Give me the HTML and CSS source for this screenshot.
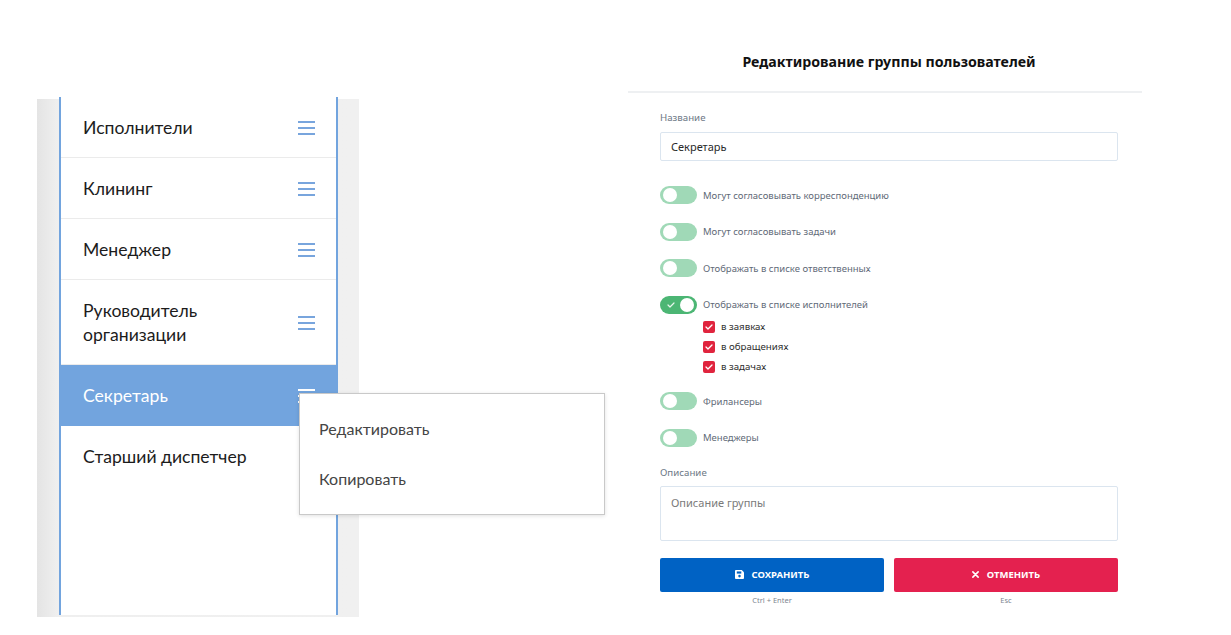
FILE: index.html
```html
<!DOCTYPE html>
<html lang="ru">
<head>
<meta charset="utf-8">
<title>Редактирование группы пользователей</title>
<link rel="stylesheet" href="styles.css">
</head>
<body>
<div class="page">
  <div class="groups">
    <div class="groups-inner">
      <ul class="group-list">
        <li class="group"><span class="group-name">Исполнители</span><span class="burger"><i></i><i></i><i></i></span></li>
        <li class="group"><span class="group-name">Клининг</span><span class="burger"><i></i><i></i><i></i></span></li>
        <li class="group"><span class="group-name">Менеджер</span><span class="burger"><i></i><i></i><i></i></span></li>
        <li class="group"><span class="group-name">Руководитель<br>организации</span><span class="burger"><i></i><i></i><i></i></span></li>
        <li class="group group-active"><span class="group-name">Секретарь</span><span class="burger"><i></i><i></i><i></i></span>
          <div class="menu">
            <div class="menu-item">Редактировать</div>
            <div class="menu-item">Копировать</div>
          </div>
        </li>
        <li class="group group-last"><span class="group-name">Старший диспетчер</span></li>
      </ul>
    </div>
  </div>

  <div class="editor">
    <h1 class="editor-title">Редактирование группы пользователей</h1>
    <div class="editor-body">
      <div class="field-label">Название</div>
      <div class="input">Секретарь</div>

      <div class="toggles">
        <div class="toggle-row"><span class="toggle"></span><span class="toggle-label">Могут согласовывать корреспонденцию</span></div>
        <div class="toggle-row"><span class="toggle"></span><span class="toggle-label">Могут согласовывать задачи</span></div>
        <div class="toggle-row"><span class="toggle"></span><span class="toggle-label">Отображать в списке ответственных</span></div>
        <div class="toggle-group">
          <div class="toggle-row"><span class="toggle toggle-on"><svg class="toggle-check" viewBox="0 0 8 6" width="8" height="6"><path d="M1 3 L3 5 L7 1" fill="none" stroke="#e8f6ed" stroke-width="1.2" stroke-linecap="round" stroke-linejoin="round"/></svg></span><span class="toggle-label">Отображать в списке исполнителей</span></div>
          <div class="checks">
            <div class="check-row"><span class="check"><svg viewBox="0 0 8 6" width="8" height="6"><path d="M1 3 L3 5 L7 1" fill="none" stroke="#fff" stroke-width="1.3" stroke-linecap="round" stroke-linejoin="round"/></svg></span><span class="check-label">в заявках</span></div>
            <div class="check-row"><span class="check"><svg viewBox="0 0 8 6" width="8" height="6"><path d="M1 3 L3 5 L7 1" fill="none" stroke="#fff" stroke-width="1.3" stroke-linecap="round" stroke-linejoin="round"/></svg></span><span class="check-label">в обращениях</span></div>
            <div class="check-row"><span class="check"><svg viewBox="0 0 8 6" width="8" height="6"><path d="M1 3 L3 5 L7 1" fill="none" stroke="#fff" stroke-width="1.3" stroke-linecap="round" stroke-linejoin="round"/></svg></span><span class="check-label">в задачах</span></div>
          </div>
        </div>
        <div class="toggle-row"><span class="toggle"></span><span class="toggle-label">Фрилансеры</span></div>
        <div class="toggle-row"><span class="toggle"></span><span class="toggle-label">Менеджеры</span></div>
      </div>

      <div class="field-label">Описание</div>
      <div class="textarea">Описание группы</div>

      <div class="actions">
        <div class="action">
          <button class="btn btn-save"><svg viewBox="0 0 10 10" width="9" height="9"><path d="M1 0 H7.5 L10 2.5 V9 Q10 10 9 10 H1 Q0 10 0 9 V1 Q0 0 1 0 Z" fill="#fff"/><rect x="2" y="1.6" width="5" height="2.4" fill="#0062c4"/><circle cx="5" cy="6.8" r="1.4" fill="#0062c4"/></svg>Сохранить</button>
          <div class="hint">Ctrl + Enter</div>
        </div>
        <div class="action">
          <button class="btn btn-cancel"><svg viewBox="0 0 8 8" width="7" height="7"><path d="M1 1 L7 7 M7 1 L1 7" stroke="#fff" stroke-width="1.8" stroke-linecap="round"/></svg>Отменить</button>
          <div class="hint">Esc</div>
        </div>
      </div>
    </div>
  </div>
</div>
</body>
</html>
```

FILE: styles.css
```css
* { box-sizing: border-box; }
html, body { margin: 0; padding: 0; background: #fff; }
body { font-family: "Open Sans", "Noto Sans", sans-serif; color: #222; }

.page {
  display: flex;
  align-items: flex-start;
  padding-left: 37px;
  width: 1231px;
  height: 635px;
  overflow: hidden;
}

/* Left: group list */
.groups {
  margin-top: 99px;
  width: 322px;
  height: 518px;
  padding: 0 21px 0 22px;
  background: linear-gradient(to right, #e4e4e4 0, #efefef 20px, #f0f0f0 100%);
  flex-shrink: 0;
}
.groups-inner {
  height: 100%;
  background: #fff;
  border-left: 2px solid #72a4de;
  border-right: 2px solid #72a4de;
}
.group-list {
  list-style: none;
  margin: -2px 0 0;
  padding: 0;
}
.group {
  position: relative;
  display: flex;
  align-items: center;
  justify-content: space-between;
  padding: 19px 21px 17px 22px;
  border-bottom: 1px solid #ebebeb;
  font-family: "Lato", "Open Sans", sans-serif;
  font-size: 17.6px;
  line-height: 24px;
  color: #1c1c1c;
}
.group-last { border-bottom: none; }
.group-active {
  background: #72a4de;
  color: #fff;
  border-bottom-color: #72a4de;
}
.burger {
  display: flex;
  flex-direction: column;
  gap: 4px;
  width: 17px;
}
.burger i {
  display: block;
  height: 2px;
  background: #78a5dd;
}
.group-active .burger i { background: #fff; }

.menu {
  position: absolute;
  left: 238px;
  top: 28px;
  width: 306px;
  height: 122px;
  padding: 10px 0;
  background: #fff;
  border: 1px solid #c9c9c9;
  box-shadow: 0 1px 4px rgba(0,0,0,0.12);
  z-index: 2;
}
.menu-item {
  height: 50px;
  line-height: 50px;
  padding-left: 19px;
  font-family: "Lato", "Open Sans", sans-serif;
  font-size: 16px;
  color: #454545;
}

/* Right: editor */
.editor {
  margin-left: 269px;
  width: 514px;
  flex-shrink: 0;
}
.editor-title {
  margin: 0;
  padding: 52px 24px 19px 32px;
  text-align: center;
  font-family: "Noto Sans", "Open Sans", sans-serif;
  font-size: 14.2px;
  line-height: 20px;
  font-weight: 700;
  color: #111;
  border-bottom: 2px solid #eef0f2;
}
.editor-body {
  padding: 18px 24px 0 32px;
  font-family: "Noto Sans", "Open Sans", sans-serif;
}
.field-label {
  font-size: 9.7px;
  line-height: 14px;
  color: #6d7886;
}
.input {
  margin-top: 7px;
  height: 29px;
  border: 1px solid #dbe5ef;
  border-radius: 2px;
  padding: 0 10px;
  font-size: 11px;
  line-height: 27px;
  color: #2a2a2a;
}
.toggles {
  margin-top: 25px;
  display: flex;
  flex-direction: column;
  gap: 18.6px;
  margin-bottom: 19px;
}
.toggle-group { margin-bottom: 1px; }
.toggle-row {
  display: flex;
  align-items: center;
  height: 18px;
}
.toggle {
  position: relative;
  width: 37px;
  height: 18px;
  border-radius: 9px;
  background: #a0d9b7;
  flex-shrink: 0;
}
.toggle::after {
  content: "";
  position: absolute;
  left: 3px;
  top: 2px;
  width: 14px;
  height: 14px;
  border-radius: 50%;
  background: #fff;
}
.toggle-on { background: #4cb674; }
.toggle-on::after { left: 20px; }
.toggle-check {
  position: absolute;
  left: 7px;
  top: 6px;
}
.toggle-label {
  margin-left: 6px;
  font-size: 9.5px;
  color: #5f6a78;
}
.checks {
  margin-top: 7px;
  padding-left: 43px;
  display: flex;
  flex-direction: column;
  gap: 8px;
}
.check-row {
  display: flex;
  align-items: center;
  height: 12px;
}
.check {
  width: 12px;
  height: 12px;
  border-radius: 2px;
  background: #e0243e;
  display: flex;
  align-items: center;
  justify-content: center;
}
.check-label {
  margin-left: 6px;
  font-size: 9.7px;
  color: #2e2e2e;
}
.textarea {
  margin-top: 6px;
  height: 55px;
  border: 1px solid #dbe5ef;
  border-radius: 2px;
  padding: 8px 10px;
  font-size: 11px;
  line-height: 16px;
  color: #7a7a7a;
}
.actions {
  margin-top: 17px;
  display: flex;
  gap: 10px;
}
.action {
  flex: 1;
  display: flex;
  flex-direction: column;
  align-items: center;
}
.btn {
  width: 100%;
  height: 34px;
  border: none;
  border-radius: 2px;
  display: flex;
  align-items: center;
  justify-content: center;
  gap: 8px;
  font-family: "Noto Sans", "Open Sans", sans-serif;
  font-size: 9.5px;
  font-weight: 700;
  text-transform: uppercase;
  color: #fff;
  letter-spacing: 0;
}
.btn-save { background: #0062c4; }
.btn-cancel { background: #e4214f; }
.hint {
  margin-top: 3px;
  font-size: 7.5px;
  line-height: 10px;
  color: #7d8590;
}
```
